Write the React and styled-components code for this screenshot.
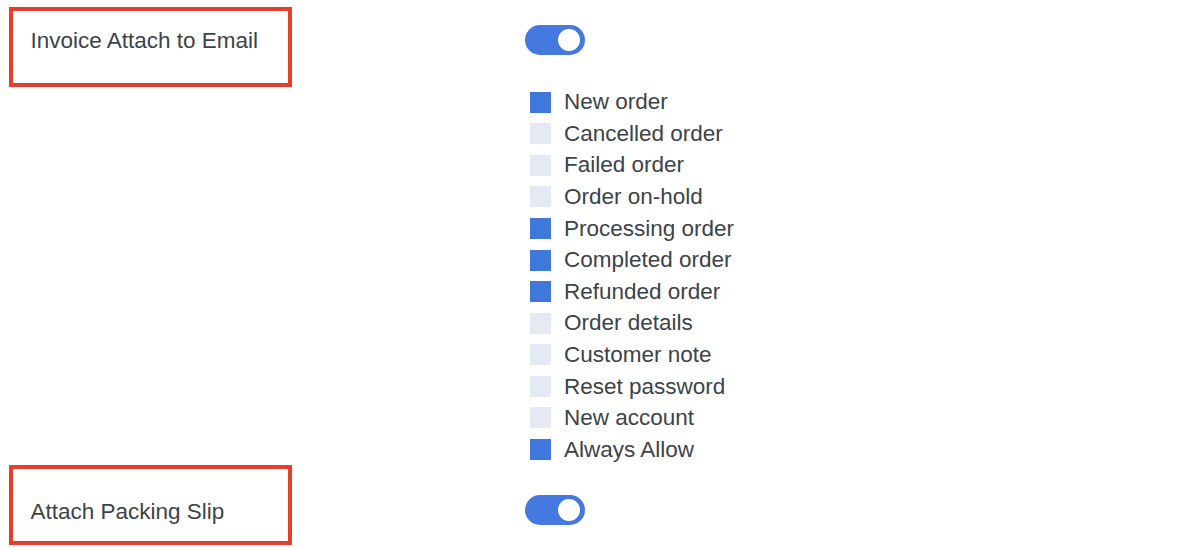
import styled, { createGlobalStyle } from "styled-components";

const GlobalStyle = createGlobalStyle`
  html, body {
    margin: 0;
    padding: 0;
    background: #ffffff;
  }
  body {
    font-family: "Liberation Sans", Arial, Helvetica, sans-serif;
    color: #3c434a;
  }
`;

const emails = [
  { label: "New order", checked: true },
  { label: "Cancelled order", checked: false },
  { label: "Failed order", checked: false },
  { label: "Order on-hold", checked: false },
  { label: "Processing order", checked: true },
  { label: "Completed order", checked: true },
  { label: "Refunded order", checked: true },
  { label: "Order details", checked: false },
  { label: "Customer note", checked: false },
  { label: "Reset password", checked: false },
  { label: "New account", checked: false },
  { label: "Always Allow", checked: true },
];

export default function App() {
  return (
    <Page>
      <GlobalStyle />
      <SettingRow>
        <LabelBox $top={14}>Invoice Attach to Email</LabelBox>
        <Controls $top={18}>
          <Toggle $on />
          <CheckList>
            {emails.map((item) => (
              <CheckItem key={item.label}>
                <Box $checked={item.checked} />
                <span>{item.label}</span>
              </CheckItem>
            ))}
          </CheckList>
        </Controls>
      </SettingRow>
      <SettingRow>
        <LabelBox $top={26.5}>Attach Packing Slip</LabelBox>
        <Controls $top={30}>
          <Toggle $on />
        </Controls>
      </SettingRow>
    </Page>
  );
}

const Page = styled.div`
  padding: 7px 0 0 9px;
  font-size: 22.5px;
  line-height: 31.5px;
`;

const SettingRow = styled.div`
  display: grid;
  grid-template-columns: 283px 1fr;
  column-gap: 233px;
  align-items: start;
`;

const LabelBox = styled.div`
  box-sizing: border-box;
  height: 80px;
  border: 4.5px solid #e3402b;
  padding: ${(p) => p.$top}px 0 0 17.5px;
  white-space: nowrap;
`;

const Controls = styled.div`
  padding-top: ${(p) => p.$top}px;
  display: flex;
  flex-direction: column;
  align-items: flex-start;
`;

const Toggle = styled.div`
  position: relative;
  width: 60px;
  height: 30px;
  border-radius: 15px;
  background: ${(p) => (p.$on ? "#4479df" : "#c3c4c7")};
  &::after {
    content: "";
    position: absolute;
    top: 4px;
    ${(p) => (p.$on ? "right: 5px;" : "left: 5px;")}
    width: 22px;
    height: 22px;
    border-radius: 50%;
    background: #ffffff;
  }
`;

const CheckList = styled.ul`
  list-style: none;
  margin: 31.25px 0 0;
  padding: 0 0 0 5px;
`;

const CheckItem = styled.li`
  display: flex;
  align-items: center;
  gap: 13px;
  height: 31.6px;
  white-space: nowrap;
`;

const Box = styled.span`
  display: block;
  width: 21px;
  height: 21px;
  flex: none;
  background: ${(p) => (p.$checked ? "#3f78dc" : "#e4e9f3")};
`;
